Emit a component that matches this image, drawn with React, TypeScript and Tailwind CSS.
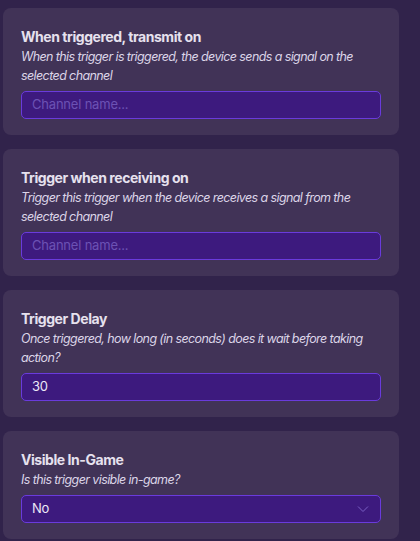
import React from "react";

function Card({ title, desc, children }: { title: string; desc: string; children: React.ReactNode }) {
  return (
    <div className="rounded-[8px] bg-[#413357] pt-[19px] pb-[16px] px-[18px]">
      <div className="text-[14px] leading-[20px] font-bold tracking-[-0.45px] text-[#e6e1ee]">{title}</div>
      <div className="text-[12.5px] leading-[19px] italic tracking-[-0.6px] text-[#dcd5e8]">{desc}</div>
      <div className="mt-[6px]">{children}</div>
    </div>
  );
}

function Input({ placeholder, value }: { placeholder?: string; value?: string }) {
  return (
    <div className="h-[28px] w-[360px] rounded-[5px] border border-[#6a3bdc] bg-[#3d1a7e] px-[10px] flex items-center text-[13px] tracking-[-0.2px]">
      {value ? (
        <span className="text-[#ece8f6]">{value}</span>
      ) : (
        <span className="text-[#6c52b4]">{placeholder}</span>
      )}
    </div>
  );
}

export default function App() {
  return (
    <div
      className="w-[420px] h-[541px] overflow-hidden bg-[#31234b] pl-[3px] pt-[8px]"
      style={{ fontFamily: "Inter, 'Noto Sans', sans-serif" }}
    >
      <div className="w-[396px] flex flex-col gap-[14px]">
        <Card
          title="When triggered, transmit on"
          desc="When this trigger is triggered, the device sends a signal on the selected channel"
        >
          <Input placeholder="Channel name..." />
        </Card>
        <Card
          title="Trigger when receiving on"
          desc="Trigger this trigger when the device receives a signal from the selected channel"
        >
          <Input placeholder="Channel name..." />
        </Card>
        <Card
          title="Trigger Delay"
          desc="Once triggered, how long (in seconds) does it wait before taking action?"
        >
          <Input value="30" />
        </Card>
        <Card title="Visible In-Game" desc="Is this trigger visible in-game?">
          <div className="h-[28px] w-[360px] rounded-[5px] border border-[#6a3bdc] bg-[#3d1a7e] px-[10px] flex items-center justify-between text-[13px] tracking-[-0.2px]">
            <span className="text-[#ece8f6]">No</span>
            <svg width="12" height="8" viewBox="0 0 12 8" className="mr-[1px]">
              <path d="M1 1.5 L6 6.5 L11 1.5" fill="none" stroke="#7a5fc4" strokeWidth="1" />
            </svg>
          </div>
        </Card>
      </div>
    </div>
  );
}
